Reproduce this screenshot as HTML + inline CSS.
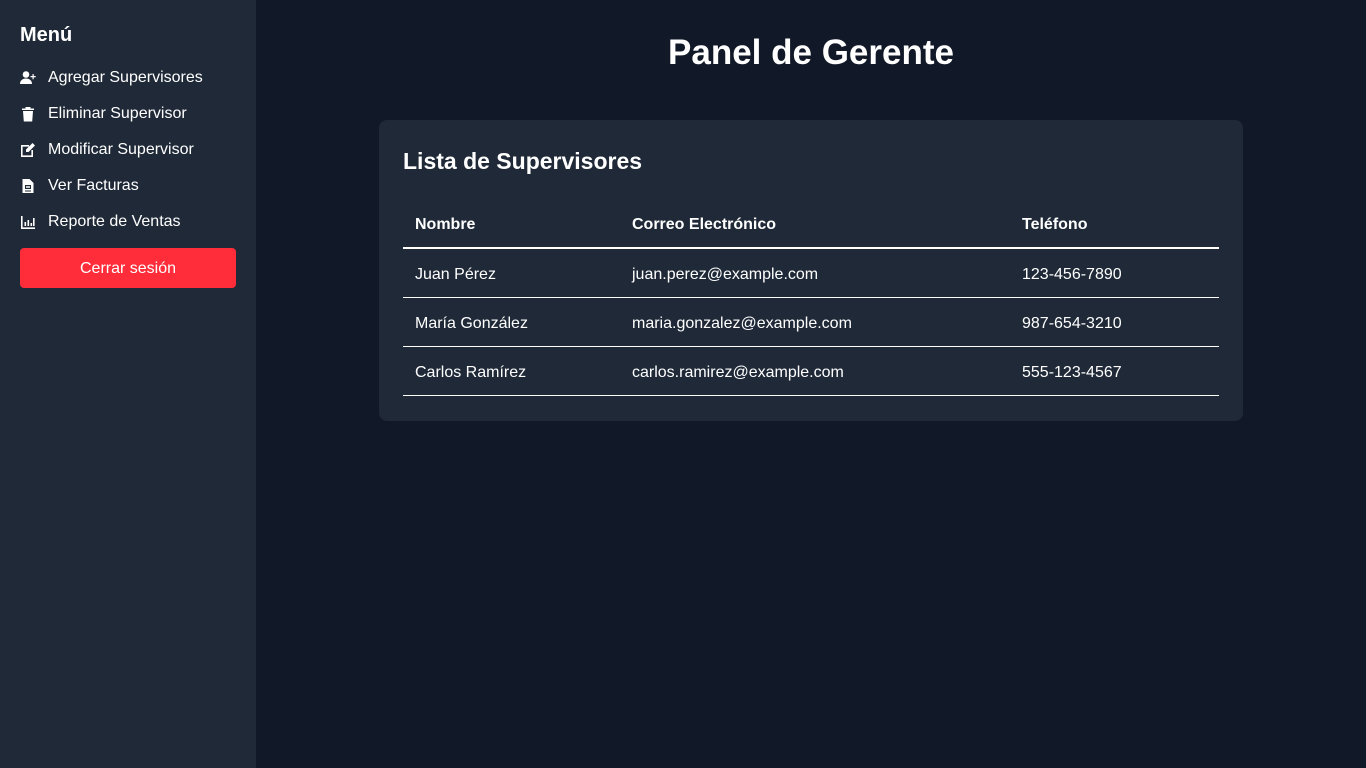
<!DOCTYPE html>
<html><head><meta charset="utf-8"><style>
*{box-sizing:border-box;margin:0;padding:0}
body{width:1366px;height:768px;background:#111827;font-family:"Liberation Sans",sans-serif;color:#fff;position:relative;overflow:hidden}
.side{position:absolute;left:0;top:0;width:256px;height:768px;background:#1f2937;padding:21px 20px 20px}
.side h2{font-size:20px;font-weight:bold;line-height:28px;margin-top:0}
.item{display:flex;align-items:center;height:36px;font-size:16px;padding-top:3px}
.item svg{width:16px;height:16px;margin-right:12px;fill:#fff}
.btn{margin-top:10px;height:40px;background:#ff2d3a;border-radius:4px;text-align:center;line-height:42px;font-size:16px}
h1{position:absolute;left:256px;width:1110px;text-align:center;top:31px;font-size:35px;line-height:44px;font-weight:bold}
.card{position:absolute;left:379px;top:120px;width:864px;height:301px;background:#1f2937;border-radius:8px;padding:24px}
.card h3{font-size:23px;font-weight:bold;line-height:32px;margin-top:0;padding-top:1px}
table{border-collapse:collapse;width:816px;margin-top:23px;font-size:16px}
th{text-align:left;font-weight:bold;height:48px;padding:3px 12px 0;border-bottom:2px solid #fff}
td{height:49px;padding:4px 12px 0;border-bottom:1px solid #fff}
</style></head><body>
<div class="side">
<h2>Menú</h2>
<div style="height:9px"></div>
<div class="item"><svg viewBox="0 0 16 16"><circle cx="6" cy="4.5" r="3.3"/><path d="M0 14c0-3.5 2.5-5.5 6-5.5s6 2 6 5.5z"/><path d="M12.5 4h1.2v2h2v1.2h-2v2h-1.2v-2h-2V6h2z"/></svg>Agregar Supervisores</div>
<div class="item"><svg viewBox="0 0 16 16"><path d="M2 2.5h12v1.5H2zM5.5 1h5v1.5h-5zM3 5h10l-.8 10.5H3.8z"/></svg>Eliminar Supervisor</div>
<div class="item"><svg viewBox="0 0 16 16"><path d="M1 3h8v1.6H2.6v8.8h8.8V8H13v7H1z"/><path d="M12.5 1l2.5 2.5-6.5 6.5H6V7.5z"/></svg>Modificar Supervisor</div>
<div class="item"><svg viewBox="0 0 16 16"><path d="M2.5 1h7l4 4v10h-11zM5 7v4h6V7zm1 1.2h4v1.6H6zM5 12.5v1h6v-1z"/></svg>Ver Facturas</div>
<div class="item"><svg viewBox="0 0 16 16"><path d="M1 2h1.6v11.4H15V15H1zM4.5 8h1.6v4H4.5zM7.5 6h1.6v6H7.5zM10.5 9h1.6v3h-1.6zM13 4h1.6v8H13z"/></svg>Reporte de Ventas</div>
<div class="btn">Cerrar sesión</div>
</div>
<h1>Panel de Gerente</h1>
<div class="card">
<h3>Lista de Supervisores</h3>
<table>
<tr><th style="width:217px">Nombre</th><th style="width:390px">Correo Electrónico</th><th>Teléfono</th></tr>
<tr><td>Juan Pérez</td><td>juan.perez@example.com</td><td>123-456-7890</td></tr>
<tr><td>María González</td><td>maria.gonzalez@example.com</td><td>987-654-3210</td></tr>
<tr><td>Carlos Ramírez</td><td>carlos.ramirez@example.com</td><td>555-123-4567</td></tr>
</table>
</div>
</body></html>
